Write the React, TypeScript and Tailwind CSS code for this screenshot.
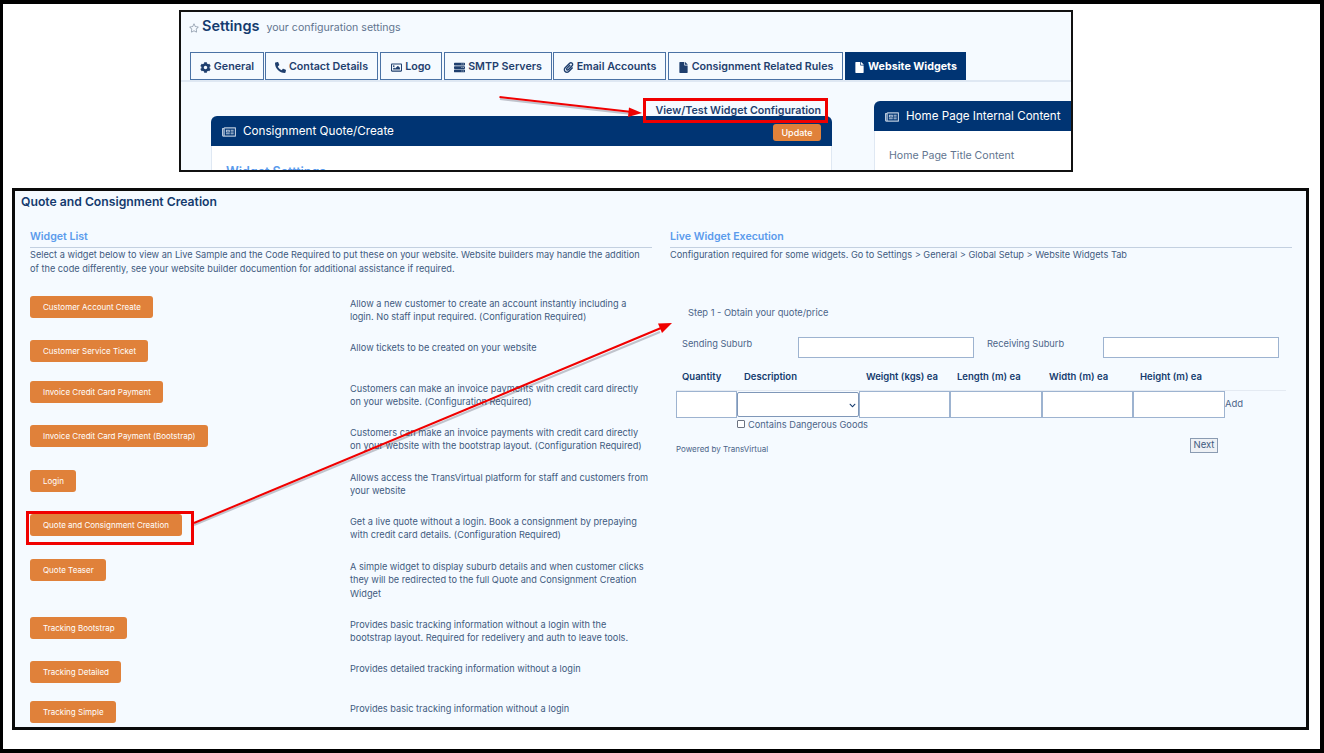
import { FaChevronDown, FaCog, FaFile, FaPaperclip, FaPhone, FaRegImage, FaRegNewspaper, FaRegStar, FaServer } from "react-icons/fa";

const tabs = [
  { label: "General", icon: <FaCog />, width: "w-[74px] mr-[1px]" },
  { label: "Contact Details", icon: <FaPhone className="-scale-x-100" />, width: "w-[113px] mr-[2px]" },
  { label: "Logo", icon: <FaRegImage />, width: "w-[62px] mr-[2px]" },
  { label: "SMTP Servers", icon: <FaServer />, width: "w-[108px] mr-[1px]" },
  { label: "Email Accounts", icon: <FaPaperclip />, width: "w-[113px] mr-[2px]" },
  { label: "Consignment Related Rules", icon: <FaFile />, width: "w-[175px] mr-[2px]" },
];

const widgets = [
  { name: "Customer Account Create", rowH: "h-[44px]", btnW: "w-[123px]", text: ["Allow a new customer to create an account instantly including a", "login. No staff input required. (Configuration Required)"] },
  { name: "Customer Service Ticket", rowH: "h-[41px]", btnW: "w-[118px]", text: ["Allow tickets to be created on your website"] },
  { name: "Invoice Credit Card Payment", rowH: "h-[44px]", btnW: "w-[133px]", text: ["Customers can make an invoice payments with credit card directly", "on your website. (Configuration Required)"] },
  { name: "Invoice Credit Card Payment (Bootstrap)", rowH: "h-[45px]", btnW: "w-[178px]", text: ["Customers can make an invoice payments with credit card directly", "on your website with the bootstrap layout. (Configuration Required)"] },
  { name: "Login", rowH: "h-[44px]", btnW: "w-[46px]", text: ["Allows access the TransVirtual platform for staff and customers from", "your website"] },
  { name: "Quote and Consignment Creation", rowH: "h-[45px]", btnW: "w-[152px]", text: ["Get a live quote without a login. Book a consignment by prepaying", "with credit card details. (Configuration Required)"] },
  { name: "Quote Teaser", rowH: "h-[58px]", btnW: "w-[76px]", text: ["A simple widget to display suburb details and when customer clicks", "they will be redirected to the full Quote and Consignment Creation", "Widget"] },
  { name: "Tracking Bootstrap", rowH: "h-[44px]", btnW: "w-[97px]", text: ["Provides basic tracking information without a login with the", "bootstrap layout. Required for redelivery and auth to leave tools."] },
  { name: "Tracking Detailed", rowH: "h-[40px]", btnW: "w-[91px]", text: ["Provides detailed tracking information without a login"] },
  { name: "Tracking Simple", rowH: "h-[40px]", btnW: "w-[86px]", text: ["Provides basic tracking information without a login"] },
];

const columns = [
  { label: "Quantity", pad: "pl-[6px]" },
  { label: "Description", pad: "pl-[7px]" },
  { label: "Weight (kgs) ea", pad: "pl-[7px]" },
  { label: "Length (m) ea", pad: "pl-[7px]" },
  { label: "Width (m) ea", pad: "pl-[7px]" },
  { label: "Height (m) ea", pad: "pl-[7px]" },
];

const field = "border border-[#9db3d0] bg-white";

function SectionHead({ title, lines }: { title: string; lines: string[] }) {
  return (
    <div>
      <h3 className="h-[19px] border-b border-[#c3d0e0] text-[10.6px] leading-[15px] font-semibold text-[#5b9bec]">{title}</h3>
      <div className="text-[9.2px] leading-[13.5px] text-[#3f5a80]">
        {lines.map((l) => (
          <p key={l} className="whitespace-nowrap">{l}</p>
        ))}
      </div>
    </div>
  );
}

export default function App() {
  return (
    <div className="relative h-[753px] w-[1324px] overflow-hidden border-t-4 border-r-4 border-b-4 border-l-[3px] border-black bg-white font-['Inter',sans-serif]">
      {/* settings crop */}
      <div className="mt-[6px] ml-[176px] h-[162px] w-[894px] overflow-hidden border-2 border-[#111] bg-[#f5faff]">
        <div className="flex h-[40px] items-start gap-[7px] pt-[3px] pl-[8px] text-[#9aa6b5]">
          <FaRegStar className="mt-[8px] text-[10px]" />
          <span className="-ml-[4px] text-[14.5px] leading-[22px] font-semibold text-[#143a6e]">Settings</span>
          <span className="pt-[2px] text-[10.6px] leading-[22px] text-[#62758f]">your configuration settings</span>
        </div>
        <div className="flex border-b-2 border-[#dfe8f3] pl-[9px]">
          {tabs.map((t) => (
            <div key={t.label} className={`${t.width} flex h-[28px] shrink-0 items-center justify-center gap-[3px] border border-[#4a72a5] pt-[2px] text-[10.7px] font-semibold text-[#1f3f6e] [&_svg]:text-[11px]`}>
              {t.icon}
              {t.label}
            </div>
          ))}
          <div className="flex h-[28px] w-[121px] items-center justify-center gap-[3px] bg-[#003473] pt-[2px] text-[10.7px] font-bold text-white [&_svg]:text-[11px]">
            <FaFile />
            Website Widgets
          </div>
        </div>
        <div className="flex pt-[19px] pl-[30px]">
          <div className="w-[621px] shrink-0">
            <div className="-mt-[1px] h-[16px] pr-[11px] text-right text-[10.7px] leading-[21px] font-semibold text-[#1f3f6e]">View/Test Widget Configuration</div>
            <div className="flex h-[30px] justify-between rounded-t-[6px] bg-[#003473] pr-[11px] pl-[11px] text-white">
              <div className="flex items-center gap-[7px] pt-[1px] text-[11.7px]">
                <FaRegNewspaper className="text-[14px] text-[#b9c9dd]" />
                Consignment Quote/Create
              </div>
              <div className="mt-[8px] flex h-[17px] w-[48px] items-center justify-center rounded-[3px] bg-[#e0813a] text-[9px] font-medium">Update</div>
            </div>
            <div className="h-[40px] border-r border-l border-[#dfe8f3] bg-white pt-[17px] pl-[14px] text-[12.5px] font-semibold text-[#5b9bec]">Widget Setttings</div>
          </div>
          <div className="ml-[42px] w-[198px] shrink-0">
            <div className="flex h-[30px] items-center gap-[7px] rounded-tl-[6px] bg-[#003473] pt-[1px] pl-[11px] text-[11.6px] text-white">
              <FaRegNewspaper className="text-[14px] text-[#b9c9dd]" />
              Home Page Internal Content
            </div>
            <div className="h-[50px] border-l border-[#dfe8f3] bg-white pt-[17px] pl-[14px] text-[10.6px] text-[#62758f]">Home Page Title Content</div>
          </div>
        </div>
      </div>

      {/* widget list crop */}
      <div className="mt-[16px] ml-[9px] h-[542px] w-[1297px] overflow-hidden border-[3px] border-[#0a0a0a] bg-[#f5faff]">
        <h2 className="h-[22px] pt-[3px] pl-[6px] text-[12.2px] leading-[15px] font-semibold text-[#143a6e]">Quote and Consignment Creation</h2>
        <div className="flex pt-[16px] pl-[15px]">
          <div className="w-[622px] shrink-0">
            <SectionHead
              title="Widget List"
              lines={[
                "Select a widget below to view an Live Sample and the Code Required to put these on your website. Website builders may handle the addition",
                "of the code differently, see your website builder documention for additional assistance if required.",
              ]}
            />
            <div className="mt-[21px]">
              {widgets.map((w) => (
                <div key={w.name} className={`${w.rowH} flex`}>
                  <div className="w-[320px] shrink-0">
                    <div className={`${w.btnW} flex h-[22px] items-center rounded-[3px] bg-[#e0813a] pl-[13px] text-[8px] whitespace-nowrap text-white`}>{w.name}</div>
                  </div>
                  <div className="pt-[1px] text-[9.2px] leading-[13.3px] text-[#3f5a80]">
                    {w.text.map((l) => (
                      <p key={l} className="whitespace-nowrap">{l}</p>
                    ))}
                  </div>
                </div>
              ))}
            </div>
          </div>

          <div className="ml-[18px] w-[622px] shrink-0">
            <SectionHead title="Live Widget Execution" lines={["Configuration required for some widgets. Go to Settings > General > Global Setup > Website Widgets Tab"]} />
            <p className="mt-[44px] ml-[18px] text-[9.3px] leading-[13px] text-[#4b6488]">Step 1 - Obtain your quote/price</p>
            <div className="mt-[18px] flex h-[21px] items-start pl-[12px] text-[9.25px] text-[#4b6488]">
              <span className="w-[116px] shrink-0 pt-[1px] leading-[12px]">Sending Suburb</span>
              <div className={`${field} h-[21px] w-[176px] shrink-0`} />
              <span className="w-[129px] shrink-0 pt-[1px] pl-[13px] leading-[12px]">Receiving Suburb</span>
              <div className={`${field} h-[21px] w-[176px] shrink-0`} />
            </div>
            <div className="ml-[6px] w-[610px]">
              <div className="grid h-[33px] grid-cols-[61px_122px_91px_92px_91px_92px] items-center border-b border-[#e4eaf2] pt-[7px] text-[9.5px] font-semibold text-[#143a6e]">
                {columns.map((c) => (
                  <span key={c.label} className={c.pad}>{c.label}</span>
                ))}
              </div>
              <div className="grid grid-cols-[61px_122px_91px_92px_91px_92px_auto]">
                <div className={`${field} h-[27px]`} />
                <div className="relative mt-px">
                  <select className="block h-[25px] w-full appearance-none rounded-[2px] border border-[#7f97b8] bg-white text-[#1f3f6e]" aria-label="Description" />
                  <FaChevronDown className="absolute top-[10px] right-[3px] text-[7px] text-[#143a6e]" />
                </div>
                <div className={`${field} h-[27px]`} />
                <div className={`${field} h-[27px]`} />
                <div className={`${field} h-[27px]`} />
                <div className={`${field} h-[27px]`} />
                <span className="pt-[7px] text-[9.5px] leading-[12px] text-[#4b6488]">Add</span>
              </div>
              <div className="mt-[1px] ml-[61px] flex h-[13px] items-center gap-[3px] text-[9.25px] text-[#4b6488]">
                <span className="-mt-[2px] block h-[8px] w-[8px] rounded-[1px] border border-[#6b7280] bg-white" />
                Contains Dangerous Goods
              </div>
              <div className="flex justify-between pt-[6px]">
                <span className="pt-[5px] text-[8px] leading-[12px] text-[#4b6488]">Powered by TransVirtual</span>
                <div className="mr-[68px] flex h-[15px] w-[28px] items-center justify-center border border-[#8a9bb2] bg-[#eef1f5] text-[9.5px] text-[#3f5a80]">Next</div>
              </div>
            </div>
          </div>
        </div>
      </div>

      {/* annotations drawn on top of the screenshots */}
      <div className="absolute top-[94px] left-[640px] h-[25px] w-[185px] border-[3px] border-[#f00000]" />
      <div className="absolute top-[507px] left-[23px] h-[34px] w-[168px] border-[3px] border-[#f00000]" />
      <svg className="pointer-events-none absolute -top-[4px] -left-[3px]" width="1324" height="753" viewBox="0 0 1324 753" fill="none">
        <g opacity="0.3" stroke="#445" strokeWidth="2">
          <path d="M500 99 L632 114" />
          <path d="M194 525 L660 332" />
        </g>
        <g stroke="#f00000" strokeWidth="2">
          <path d="M499.5 97 L632 112" />
          <path d="M194 523 L661 328" />
        </g>
        <path d="M642 113 L629 107.500 L628 117 Z" fill="#f00000" />
        <path d="M672 323 L658 323.500 L662 333 Z" fill="#f00000" />
      </svg>
    </div>
  );
}
